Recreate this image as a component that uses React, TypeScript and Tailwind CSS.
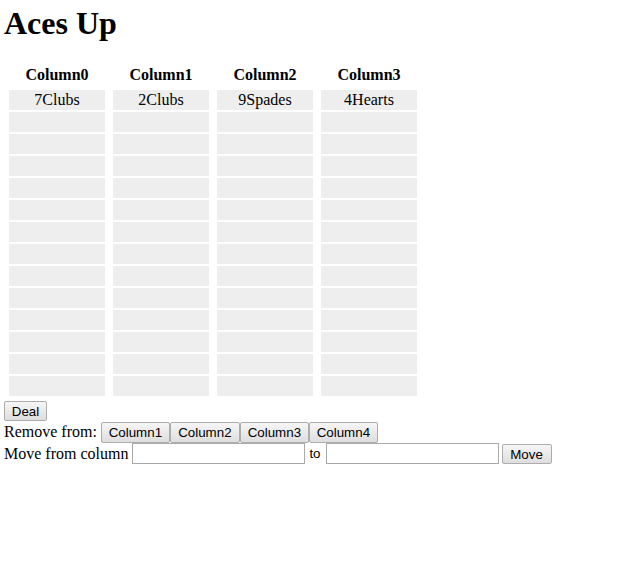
import React from "react";

const btn =
  "h-[20px] border border-[#adadad] rounded-[2px] bg-linear-to-b from-[#f6f6f6] to-[#dedede] text-[13.33px] leading-[15px] text-black font-['Liberation_Sans',Arial,sans-serif] text-center p-0";

export default function App() {
  const cols = ["Column0", "Column1", "Column2", "Column3"];
  const first = ["7Clubs", "2Clubs", "9Spades", "4Hearts"];
  const rows = 14;
  const cells: React.ReactNode[] = [];
  for (let r = 0; r < rows; r++) {
    for (let c = 0; c < 4; c++) {
      cells.push(
        <div
          key={`${r}-${c}`}
          className="h-[20px] bg-[#eeeeee] text-center leading-[20px]"
        >
          {r === 0 ? first[c] : ""}
        </div>
      );
    }
  }
  return (
    <div className="min-h-[569px] w-full bg-white pl-[4px] text-[16px] text-black font-['Liberation_Serif','Times_New_Roman',serif]">
      <h1 className="pt-[5px] text-[32px] font-bold leading-[37px]">Aces Up</h1>
      <div className="mt-[22px] ml-[5px] grid grid-cols-[repeat(4,96px)] gap-x-[8px] gap-y-[2px]">
        {cols.map((c) => (
          <div key={c} className="h-[24px] pt-[2px] text-center font-bold leading-[18px]">
            {c}
          </div>
        ))}
        {cells}
      </div>
      <div className="mt-[5px] flex h-[20px]">
        <button className={`${btn} w-[43px]`}>Deal</button>
      </div>
      <div className="mt-[1px] flex items-start h-[21px]">
        <span className="leading-[18px] mt-[1px]">Remove from:</span>
        <button className={`${btn} ml-[4px] w-[69px] h-[21px]`}>Column1</button>
        <button className={`${btn} w-[70px] h-[21px]`}>Column2</button>
        <button className={`${btn} w-[69px] h-[21px]`}>Column3</button>
        <button className={`${btn} w-[69px] h-[21px]`}>Column4</button>
      </div>
      <div className="flex items-start h-[21px]">
        <span className="leading-[18px] mt-[2px]">Move from column</span>
        <input className="ml-[4px] w-[173px] h-[21px] border border-[#a9a9a9] bg-white outline-none" />
        <span className="ml-[4px] mt-[3px] text-[13.33px] leading-[15px] font-['Liberation_Sans',Arial,sans-serif]">
          to
        </span>
        <input className="ml-[5px] w-[173px] h-[21px] border border-[#a9a9a9] bg-white outline-none" />
        <button className={`${btn} ml-[3px] mt-[1px] w-[50px]`}>Move</button>
      </div>
    </div>
  );
}
